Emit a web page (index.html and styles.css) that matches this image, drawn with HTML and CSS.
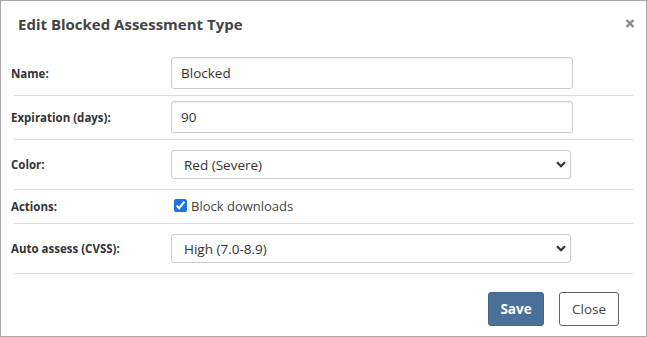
FILE: index.html
```html
<!DOCTYPE html>
<html>
<head>
<meta charset="utf-8">
<link rel="stylesheet" href="styles.css">
</head>
<body>
<div class="modal">
  <div class="modal-header">
    <h1 class="modal-title">Edit Blocked Assessment Type</h1>
    <button class="close-x" aria-label="Close">
      <svg width="10" height="9" viewBox="0 0 10 9"><path d="M1.5 1 L8.5 8 M8.5 1 L1.5 8" stroke="#8a8a8a" stroke-width="2.4" stroke-linecap="butt"/></svg>
    </button>
  </div>
  <div class="form">
    <div class="row row-input">
      <label class="lbl">Name:</label>
      <input class="text-input" type="text" value="Blocked">
    </div>
    <div class="row row-input">
      <label class="lbl">Expiration (days):</label>
      <input class="text-input" type="text" value="90">
    </div>
    <div class="row row-select">
      <label class="lbl">Color:</label>
      <div class="select-wrap">
        <select class="sel"><option>Red (Severe)</option></select>
        <svg class="chev" width="10" height="7" viewBox="0 0 10 7"><path d="M1 1.3 L5 5.3 L9 1.3" fill="none" stroke="#333" stroke-width="2.2"/></svg>
      </div>
    </div>
    <div class="row row-check">
      <label class="lbl">Actions:</label>
      <label class="check"><input type="checkbox" checked class="cb">Block downloads</label>
    </div>
    <div class="row row-select">
      <label class="lbl">Auto assess (CVSS):</label>
      <div class="select-wrap">
        <select class="sel"><option>High (7.0-8.9)</option></select>
        <svg class="chev" width="10" height="7" viewBox="0 0 10 7"><path d="M1 1.3 L5 5.3 L9 1.3" fill="none" stroke="#333" stroke-width="2.2"/></svg>
      </div>
    </div>
  </div>
  <div class="footer">
    <button class="btn btn-save">Save</button>
    <button class="btn btn-close">Close</button>
  </div>
</div>
</body>
</html>
```
FILE: styles.css
```css
* { box-sizing: border-box; }
html, body { margin: 0; padding: 0; background: #fff; }
body {
  font-family: "Open Sans", "Noto Sans", sans-serif;
  color: #333;
  width: 647px;
  height: 337px;
}
.modal {
  width: 647px;
  height: 337px;
  border: 1px solid #a8a8a8;
  display: flex;
  flex-direction: column;
}
.modal-header {
  height: 51px;
  display: flex;
  align-items: flex-start;
  justify-content: space-between;
  padding: 13px 11px 0 17px;
}
.modal-title {
  margin: 0;
  font-size: 15px;
  font-weight: 700;
  color: #444;
  line-height: 20px;
}
.close-x {
  border: 0;
  background: none;
  padding: 0;
  margin-top: 5px;
  width: 10px;
  height: 9px;
  display: flex;
}
.form {
  padding: 0 13px 0 13px;
  display: flex;
  flex-direction: column;
}
.row {
  display: flex;
  align-items: center;
  border-bottom: 1px solid #dedede;
}
.row-input { padding: 5px 0 6px; }
.row-select { padding: 10px 0 10px; }
.row-check { padding: 9px 0 9px; height: 34px; }
.lbl {
  width: 160px;
  flex: none;
  margin-left: -3px;
  font-size: 11.5px;
  font-weight: 700;
  color: #333;
}
.text-input {
  width: 402px;
  height: 32px;
  border: 1px solid #ccc;
  border-radius: 3px;
  box-shadow: inset 0 1px 1px rgba(0,0,0,0.06);
  padding: 0 9px;
  font-family: inherit;
  font-size: 13.5px;
  color: #333;
  outline: none;
}
.select-wrap {
  position: relative;
  width: 400px;
  height: 29px;
}
.sel {
  appearance: none;
  -webkit-appearance: none;
  width: 100%;
  height: 100%;
  border: 1px solid #ccc;
  border-radius: 3px;
  background: #fff;
  padding: 0 12px;
  font-family: inherit;
  font-size: 13.5px;
  color: #333;
  outline: none;
}
.chev {
  position: absolute;
  right: 5px;
  top: 11px;
}
.check {
  display: flex;
  align-items: center;
  font-size: 13px;
  color: #444;
  margin-left: 3px;
  margin-top: -2px;
}
.cb {
  margin: 0 4px 0 0;
  width: 13px;
  height: 13px;
  accent-color: #1a73e8;
}
.footer {
  flex: 1;
  display: flex;
  justify-content: flex-end;
  align-items: flex-start;
  gap: 15px;
  padding: 18px 27px 0 0;
}
.btn {
  height: 34px;
  border-radius: 3px;
  font-family: inherit;
  font-size: 13.5px;
  padding: 0;
}
.btn-save {
  width: 56px;
  background: #4a6f99;
  border: 1px solid #436790;
  color: #fff;
  font-weight: 700;
}
.btn-close {
  width: 60px;
  background: #fff;
  border: 1px solid #666;
  color: #444;
}
```
